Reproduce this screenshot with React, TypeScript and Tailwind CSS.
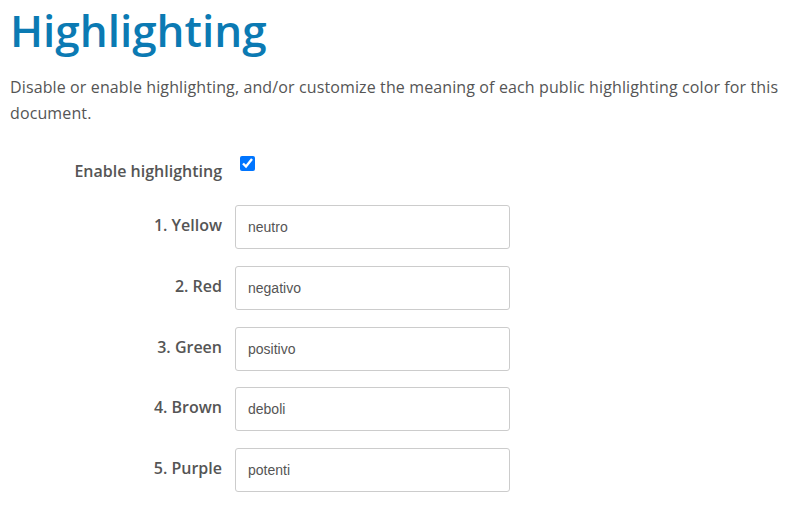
const colors = [
  { label: '1. Yellow', value: 'neutro', gap: 'mt-[23px]' },
  { label: '2. Red', value: 'negativo', gap: 'mt-[17px]' },
  { label: '3. Green', value: 'positivo', gap: 'mt-[17px]' },
  { label: '4. Brown', value: 'deboli', gap: 'mt-[16px]' },
  { label: '5. Purple', value: 'potenti', gap: 'mt-[17px]' },
];

export default function App() {
  return (
    <div className="min-h-screen bg-white px-[10px] font-['Open_Sans',sans-serif] text-[#555]">
      <h1 className="text-[44px] font-semibold leading-[60px] text-[#0b7ab3]">Highlighting</h1>
      <p className="mt-[14px] text-[16px] leading-[26px] tracking-[0.12px]">
        Disable or enable highlighting, and/or customize the meaning of each public highlighting color for this
        document.
      </p>

      <div className="mt-[27px] grid grid-cols-[212px_1fr] gap-x-[13px]">
        <label className="pt-[7px] text-right text-[16px] font-semibold leading-[22px]">Enable highlighting</label>
        <div>
          <input type="checkbox" defaultChecked className="ml-[5px] mt-[-1px] h-[15px] w-[15px] accent-[#0075ff]" />
        </div>

        {colors.map((c) => (
          <div key={c.label} className="contents">
            <label className={`${c.gap} pt-[9px] text-right text-[16px] font-semibold leading-[22px]`}>{c.label}</label>
            <div className={c.gap}>
              <input
                type="text"
                defaultValue={c.value}
                className="h-[44px] w-[275px] rounded-[3px] border border-[#ccc] px-[12px] font-['Liberation_Sans',Arial,sans-serif] text-[14px] text-[#555] outline-none"
              />
            </div>
          </div>
        ))}
      </div>
    </div>
  );
}
